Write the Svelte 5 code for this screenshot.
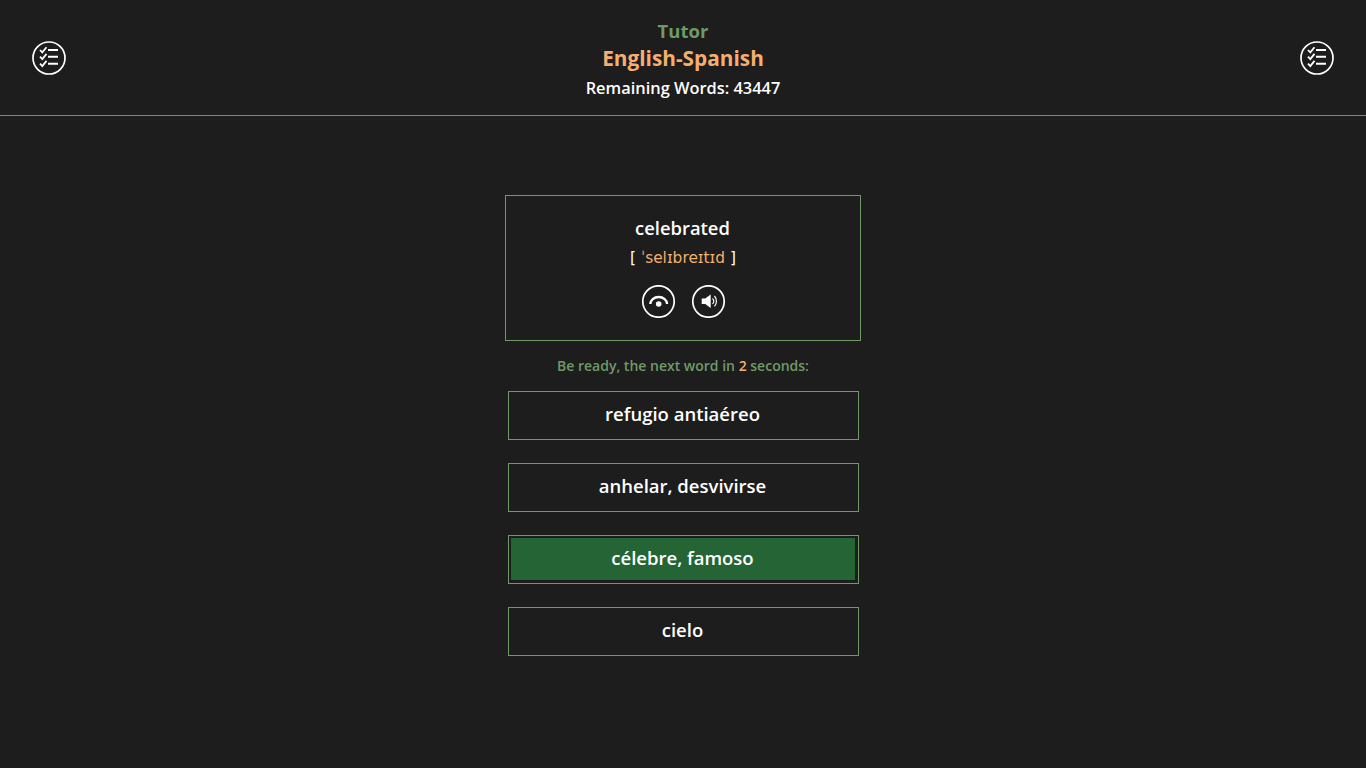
<script>
  let options = [
    { text: "refugio antiaéreo", correct: false },
    { text: "anhelar, desvivirse", correct: false },
    { text: "célebre, famoso", correct: true },
    { text: "cielo", correct: false },
  ];
</script>

<div class="page">
  <header class="top-bar">
    <button class="round-btn list-btn" aria-label="Word list">
      <svg viewBox="0 0 34 34" width="34" height="34">
        <circle cx="17" cy="17" r="16" />
        <path class="tick" d="M8 9l2.3 2.4 4.2-5.2" />
        <path class="tick" d="M8 15.7l2.3 2.4 4.2-5.2" />
        <path class="tick" d="M8 22.7l2.3 2.4 4.2-5.2" />
        <path class="bar" d="M16 9h10M16 15.8h10M16 22.8h10" />
      </svg>
    </button>
    <div class="titles">
      <div class="app-name">Tutor</div>
      <div class="course">English-Spanish</div>
      <div class="remaining">Remaining Words: 43447</div>
    </div>
    <button class="round-btn list-btn" aria-label="Word list">
      <svg viewBox="0 0 34 34" width="34" height="34">
        <circle cx="17" cy="17" r="16" />
        <path class="tick" d="M8 9l2.3 2.4 4.2-5.2" />
        <path class="tick" d="M8 15.7l2.3 2.4 4.2-5.2" />
        <path class="tick" d="M8 22.7l2.3 2.4 4.2-5.2" />
        <path class="bar" d="M16 9h10M16 15.8h10M16 22.8h10" />
      </svg>
    </button>
  </header>

  <main class="quiz">
    <section class="word-card">
      <div class="word">celebrated</div>
      <div class="phonetic">[ <span>ˈselɪbreɪtɪd</span> ]</div>
      <div class="actions">
        <button class="round-btn" aria-label="Reveal">
          <svg viewBox="0 0 33 33" width="33" height="33">
            <circle cx="16.5" cy="16.5" r="15.7" />
            <path class="arc" d="M8.3 19a8.4 7 0 0 1 16.8 0" />
            <circle class="dot" cx="16.7" cy="19" r="2.8" />
          </svg>
        </button>
        <button class="round-btn" aria-label="Play sound">
          <svg viewBox="0 0 33 33" width="33" height="33">
            <circle cx="16.5" cy="16.5" r="15.7" />
            <path class="dot" d="M9.7 13.5h3.5l5.5-4v13.4l-5.5-4H9.7z" />
            <path class="wave" d="M20.5 13.5a3.5 3.5 0 0 1 0 5.4M22.5 11a8 8 0 0 1 0 10.4" />
          </svg>
        </button>
      </div>
    </section>

    <p class="countdown">Be ready, the next word in <b>2</b> seconds:</p>

    <div class="options">
      {#each options as option}
        <button class="option" class:correct={option.correct}>
          <span>{option.text}</span>
        </button>
      {/each}
    </div>
  </main>
</div>

<style>
  :global(body) {
    background: #1d1d1d;
  }

  .page {
    height: 768px;
    overflow: hidden;
    background: #1d1d1d;
    color: #fff;
    font-family: "Open Sans", "Noto Sans", sans-serif;
  }

  .top-bar {
    height: 115px;
    display: flex;
    justify-content: space-between;
    align-items: center;
    padding: 0 32px;
    border-bottom: 1px solid #7d8a7a;
  }

  .titles {
    text-align: center;
    font-weight: 600;
    padding-top: 3px;
  }

  .app-name {
    color: #6f9a68;
    font-size: 18.5px;
    font-weight: 700;
    line-height: 28px;
  }

  .course {
    color: #f4ae6f;
    font-size: 20.8px;
    font-weight: 700;
    line-height: 27px;
    margin-bottom: 2px;
  }

  .remaining {
    font-size: 16.4px;
    line-height: 28px;
  }

  .round-btn {
    display: block;
    padding: 0;
    background: none;
    border: none;
  }

  .round-btn svg {
    display: block;
  }

  .round-btn circle {
    fill: none;
    stroke: #fff;
    stroke-width: 1.7;
  }

  .tick {
    fill: none;
    stroke: #fff;
    stroke-width: 1.8;
  }

  .bar {
    fill: none;
    stroke: #fff;
    stroke-width: 2;
  }

  .arc {
    fill: none;
    stroke: #fff;
    stroke-width: 2.4;
  }

  .wave {
    fill: none;
    stroke: #fff;
    stroke-width: 1.2;
  }

  .round-btn .dot {
    fill: #fff;
    stroke: none;
  }

  .quiz {
    display: flex;
    flex-direction: column;
    align-items: center;
    padding-top: 79px;
  }

  .word-card {
    box-sizing: border-box;
    width: 356px;
    height: 146px;
    margin-left: -1px;
    border: 1px solid #6f9a68;
    text-align: center;
    padding-top: 18px;
  }

  .word {
    font-size: 18.4px;
    font-weight: 600;
    line-height: 28px;
  }

  .phonetic {
    font-family: "DejaVu Sans", sans-serif;
    font-size: 15.4px;
    line-height: 28px;
    margin-top: 2px;
    padding-left: 1px;
  }

  .phonetic span {
    color: #f4ae6f;
  }

  .actions {
    display: flex;
    justify-content: center;
    gap: 17px;
    margin-top: 13px;
    padding-left: 2px;
  }

  .countdown {
    margin: 15px 0 0;
    height: 35px;
    line-height: 20px;
    font-size: 14px;
    font-weight: 600;
    color: #6f9a68;
  }

  .countdown b {
    color: #f4ae6f;
    font-weight: 600;
  }

  .options {
    display: flex;
    flex-direction: column;
    gap: 23px;
  }

  .option {
    box-sizing: border-box;
    display: block;
    width: 351px;
    height: 49px;
    padding: 2px 3px 3px 2px;
    background: none;
    border: 1px solid #6f9a68;
    color: #fff;
    font-family: inherit;
    font-size: 18.5px;
    font-weight: 600;
  }

  .option span {
    display: block;
    height: 100%;
    line-height: 39px;
  }

  .option.correct span {
    background: #256535;
  }
</style>
